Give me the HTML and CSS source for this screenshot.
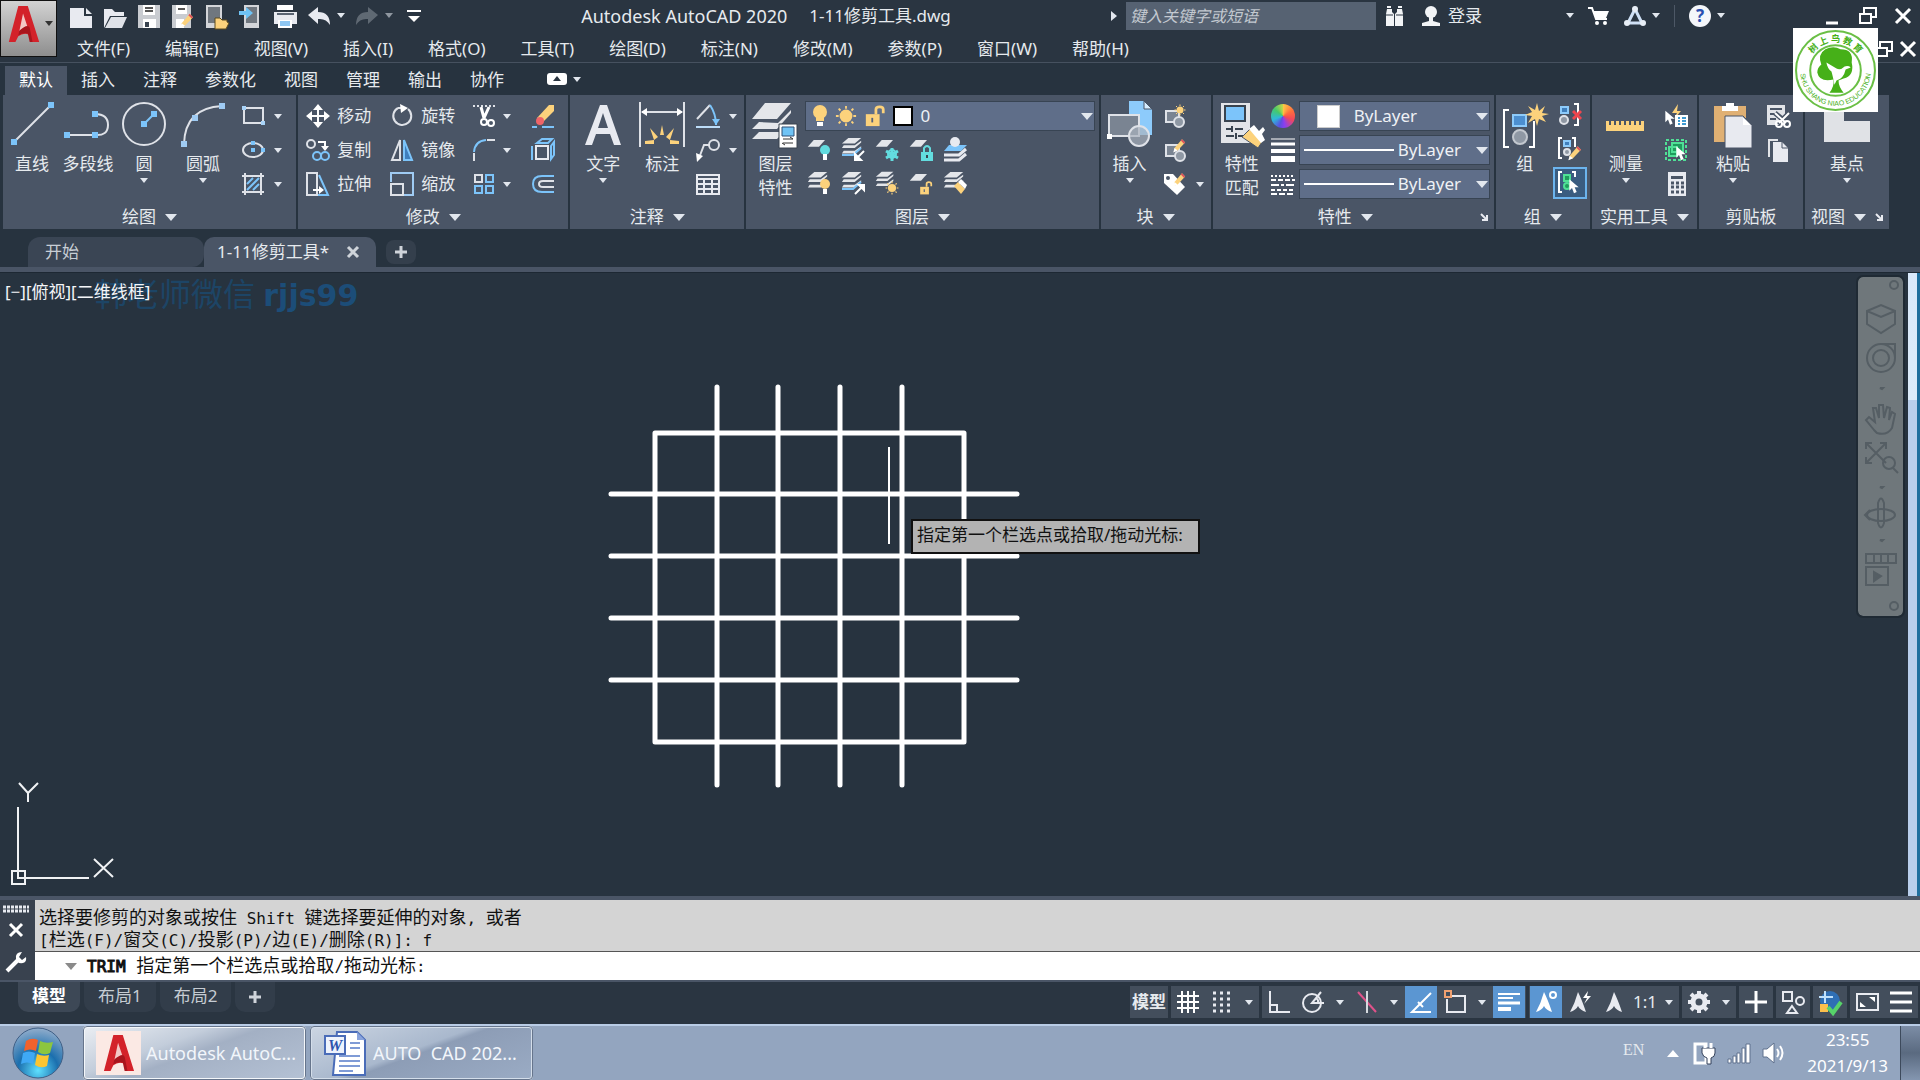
FILE: index.html
```
<!DOCTYPE html>
<html lang="zh-CN">
<head>
    <meta charset="UTF-8">
    <meta name="viewport" content="width=device-width, initial-scale=1.0">
    <title>Autodesk AutoCAD 2020 - 1-11修剪工具.dwg</title>
    <link rel="stylesheet" href="styles.css">
</head>
<body>

<!-- Symboles partagés -->
<svg class="sprite" aria-hidden="true">
  <symbol id="sheet" viewBox="0 0 24 24"><path d="M9 4h15l-8 9H1z" fill="#e4e6ea"/></symbol>
  <symbol id="stack" viewBox="0 0 24 24">
    <path d="M8 1h14l-7 6H1z" fill="#e4e6ea"/>
    <path d="M4 9h-1l-2 3h14l7-6v-2l-7 5zM4 15h-1l-2 3h14l7-6v-2l-7 5z" fill="#e4e6ea"/>
  </symbol>
  <symbol id="bulb" viewBox="0 0 16 24"><circle cx="8" cy="8" r="7" fill="#fcd27c"/><path d="M4 12h8v5H4z" fill="#fcd27c"/><path d="M5 18h6v4H5z" fill="#fff"/></symbol>
  <symbol id="sun" viewBox="0 0 24 24"><circle cx="12" cy="12" r="7" fill="#fcd27c"/><path d="M12 1v3M12 20v3M1 12h3M20 12h3M4 4l2 2M18 18l2 2M4 20l2-2M18 6l2-2" stroke="#fcd27c" stroke-width="2"/></symbol>
  <symbol id="lock" viewBox="0 0 24 24"><path d="M2 10h15v13H2z" fill="#fcd27c"/><path d="M13 10V5q0-3 4-3t4 3v4" fill="none" stroke="#fcd27c" stroke-width="3"/><path d="M9 14v5" stroke="#56627a" stroke-width="2"/></symbol>
  <symbol id="pencil" viewBox="0 0 24 24"><path d="M4 16L16 2l5 5L9 20l-6 2z" fill="#fcd27c"/><path d="M16 2l5 5-2 2-5-5z" fill="#e0525c"/><path d="M4 16l5 4-7 3z" fill="#fff"/></symbol>
  <symbol id="alogo" viewBox="0 0 34 40"><path d="M11 1h10l12 38h-9l-2-8q-6-2-11 2l-3 6H1z" fill="#d3222a"/><path d="M16 9l5 15q-6 0-9 4z" fill="#f3c8c6"/><path d="M12 27q9-8 11-3l3 15h-3l-2-9q-6-1-10 2z" fill="#a8151d"/></symbol>
  <symbol id="hand" viewBox="0 0 24 24"><path d="M2 2v17l4-4 3 8 4-2-3-7h6z" fill="#fff"/></symbol>
</svg>

<!-- Barre de titre + menus -->
<header class="header">
  <button class="app-btn" aria-label="应用程序菜单"><svg width="34" height="38"><use href="#alogo"/></svg><i class="tri sm dark"></i></button>
  <div class="titlebar">
    <div class="quick">
      <button aria-label="新建"><svg width="24" height="24"><path d="M1 4h14v8h8v12H1z" fill="#e8eaf0"/><path d="M17 4l6 6h-6z" fill="#e8eaf0"/></svg></button>
      <button aria-label="打开"><svg width="24" height="24"><path d="M1 24V5h8l3 3h9v4H7z" fill="#e8eaf0"/><path d="M8 13h16l-5 11H2z" fill="#dfe2e8"/></svg></button>
      <button aria-label="保存"><svg width="24" height="24"><path d="M1 1h22v23H1z" fill="#c9ccd1"/><path d="M6 1h12v10H6z" fill="#fff"/><path d="M8 4h8M8 7h8" stroke="#555" stroke-width="2"/><path d="M6 15h13v9H6z" fill="#fff"/><path d="M8 18h4v5H8z" fill="#38434f"/></svg></button>
      <button aria-label="另存为"><svg width="24" height="24"><path d="M1 1h19v23H1z" fill="#c9ccd1"/><path d="M5 1h11v9H5z" fill="#fff"/><path d="M7 5h7" stroke="#555" stroke-width="2"/><path d="M5 15h8v9H5z" fill="#fff"/><use href="#pencil" x="8" y="8" width="16" height="17"/></svg></button>
      <button aria-label="从移动设备打开"><svg width="24" height="24"><path d="M1 1h16v23H1z" fill="#d3d5d9"/><path d="M3 3h12v16H3z" fill="#70777f"/><path d="M10 14h5l2 2h5v2l2 1-3 6H10z" fill="#fcd27c" stroke="#5b4a20"/></svg></button>
      <button aria-label="保存到移动设备"><svg width="24" height="24"><path d="M5 1h15v23H5z" fill="#d3d5d9"/><path d="M7 3h11v16H7z" fill="#70777f"/><path d="M0 7h7V3l7 6-7 6v-4H0z" fill="#6fc3f5"/></svg></button>
      <button aria-label="打印"><svg width="24" height="24"><path d="M4 1h16v5H4z" fill="#fff"/><path d="M1 8h23v12H1z" fill="#e8eaf0"/><path d="M4 10h17" stroke="#5a6472" stroke-width="2"/><path d="M5 16h14v8H5z" fill="#fff"/><path d="M7 17h10v5H7z" fill="#8ec6f2"/></svg></button>
      <span class="pair"><button aria-label="放弃"><svg width="24" height="24"><path d="M1 11L11 3v5q12 0 12 13-4-7-12-6v5z" fill="#e8eaf0"/></svg></button><i class="tri sm"></i></span>
      <span class="pair dim"><button aria-label="重做"><svg width="24" height="24"><path d="M23 11L13 3v5Q1 8 1 21q4-7 12-6v5z" fill="#8c949d"/></svg></button><i class="tri sm"></i></span>
      <button aria-label="自定义"><svg width="14" height="24"><path d="M0 7h14" stroke="#fff" stroke-width="2"/><path d="M1 12h12l-6 6z" fill="#fff"/></svg></button>
    </div>
    <h1 class="title"><span class="product">Autodesk AutoCAD 2020</span><span>1-11修剪工具.dwg</span></h1>
    <div class="search"><i class="tri side"></i><input type="text" placeholder="键入关键字或短语" aria-label="搜索"></div>
    <div class="account">
      <button aria-label="搜索帮助"><svg width="22" height="22"><path d="M3 4h5v3l2 2v12H2V9zM13 4h5l1 5v12h-8V9l2-2z" fill="#f2f4f6"/><path d="M3 1h4v2H3zM14 1h4v2h-4z" fill="#f2f4f6"/><path d="M2 10h7M12 10h7" stroke="#2a3541"/></svg></button>
      <button class="login"><svg width="22" height="22"><circle cx="11" cy="7" r="6" fill="#f2f4f6"/><path d="M9 12h4v4l7 2v3H2v-3l7-2z" fill="#f2f4f6"/></svg>登录</button>
      <i class="tri sm login-arrow"></i>
      <button class="cart" aria-label="购物车"><svg width="22" height="22"><path d="M0 3h4l4 11h11" fill="none" stroke="#fff" stroke-width="2"/><path d="M5 6h16l-3 7H8z" fill="#fff"/><circle cx="9" cy="18" r="2" fill="#fff"/><circle cx="17" cy="18" r="2" fill="#fff"/></svg></button>
      <span class="pair"><button aria-label="Autodesk App"><svg width="22" height="22"><path d="M11 4L4 18h14z" fill="none" stroke="#cfe0f5" stroke-width="3"/><g fill="#e8eef6"><circle cx="11" cy="4" r="3"/><circle cx="3" cy="18" r="3"/><circle cx="19" cy="18" r="3"/></g></svg></button><i class="tri sm"></i></span>
      <span class="pair help"><button aria-label="帮助"><svg width="22" height="22"><circle cx="11" cy="11" r="11" fill="#f4f6fa"/><text x="11" y="17" text-anchor="middle" class="help-mark">?</text></svg></button><i class="tri sm"></i></span>
    </div>
    <div class="win-btns">
      <button aria-label="最小化"><svg width="20" height="22"><path d="M3 18h12" stroke="#fff" stroke-width="3"/></svg></button>
      <button aria-label="还原"><svg width="20" height="22"><path d="M6 8V3h12v9h-4M2 9h11v9H2z" fill="none" stroke="#fff" stroke-width="2"/></svg></button>
      <button aria-label="关闭"><svg width="20" height="22"><path d="M3 4l14 14M17 4L3 18" stroke="#fff" stroke-width="3"/></svg></button>
    </div>
  </div>
  <nav class="menubar">
    <a href="#">文件(F)</a><a href="#">编辑(E)</a><a href="#">视图(V)</a><a href="#">插入(I)</a><a href="#">格式(O)</a><a href="#">工具(T)</a><a href="#">绘图(D)</a><a href="#">标注(N)</a><a href="#">修改(M)</a><a href="#">参数(P)</a><a href="#">窗口(W)</a><a href="#">帮助(H)</a>
    <div class="doc-btns">
      <button aria-label="还原文档"><svg width="20" height="20"><path d="M6 8V3h12v9h-4M2 9h11v8H2z" fill="none" stroke="#fff" stroke-width="2"/></svg></button>
      <button aria-label="关闭文档"><svg width="20" height="20"><path d="M3 3l14 14M17 3L3 17" stroke="#fff" stroke-width="3"/></svg></button>
    </div>
  </nav>
</header>

<!-- Onglets du ruban -->
<nav class="ribbon-tabs">
  <a href="#" class="active">默认</a><a href="#">插入</a><a href="#">注释</a><a href="#">参数化</a><a href="#">视图</a><a href="#">管理</a><a href="#">输出</a><a href="#">协作</a>
  <button class="pair" aria-label="最小化功能区"><svg width="20" height="12"><rect width="20" height="12" rx="3" fill="#fff"/><path d="M10 3l4 5H6z" fill="#2a3541"/></svg><i class="tri sm"></i></button>
</nav>

<!-- Ruban -->
<div class="ribbon">
  <section class="panel draw">
    <div class="body">
      <button class="big"><svg width="46" height="46"><path d="M5 41L42 4" stroke="#dfe2e8" stroke-width="2"/><path d="M2 38h6v6H2zM39 1h6v6h-6z" fill="#7cc4fa"/></svg>直线</button>
      <button class="big wide"><svg width="50" height="46"><path d="M4 34h28M32 13q13 0 13 11t-13 10" fill="none" stroke="#dfe2e8" stroke-width="2"/><path d="M1 31h6v6H1zM29 31h6v6h-6zM29 10h6v6h-6z" fill="#7cc4fa"/></svg>多段线</button>
      <button class="big"><svg width="46" height="46"><circle cx="23" cy="23" r="21" fill="none" stroke="#dfe2e8" stroke-width="2"/><path d="M23 23l9-9" stroke="#7cc4fa" stroke-width="2"/><path d="M20 20h6v6h-6zM30 10h6v6h-6z" fill="#7cc4fa"/></svg>圆<i class="tri sm"></i></button>
      <button class="big wider"><svg width="46" height="46"><path d="M4 43Q5 7 42 5" fill="none" stroke="#dfe2e8" stroke-width="2"/><path d="M1 40h6v6H1zM12 14h6v6h-6zM39 2h6v6h-6z" fill="#9fcbf3"/></svg>圆弧<i class="tri sm"></i></button>
      <div class="small-col">
        <button><svg width="24" height="24"><path d="M3 4h19v15H3z" fill="none" stroke="#dfe2e8" stroke-width="2"/><path d="M1 2h4v4H1zM20 17h4v4h-4z" fill="#a8d3f8"/></svg><i class="tri sm"></i></button>
        <button><svg width="24" height="24"><ellipse cx="12" cy="12" rx="10" ry="7" fill="none" stroke="#dfe2e8" stroke-width="2"/><path d="M10 3h4v4h-4zM10 10h4v4h-4zM20 10h4v4h-4z" fill="#7cc4fa"/></svg><i class="tri sm"></i></button>
        <button><svg width="24" height="24"><path d="M4 1v22M20 1v22M1 4h22M1 20h22" stroke="#dfe2e8" stroke-width="2"/><path d="M6 12l6-6M6 18L18 6M12 18l6-6" stroke="#7cc4fa" stroke-width="2"/></svg><i class="tri sm"></i></button>
      </div>
    </div>
    <h2>绘图<i class="tri"></i></h2>
  </section>

  <section class="panel modify">
    <div class="body">
      <div class="mod-grid">
        <button><svg width="24" height="24"><path d="M12 3v18M3 12h18" stroke="#fff" stroke-width="2"/><path d="M12 0l5 6H7zM12 24l5-6H7zM0 12l6-5v10zM24 12l-6-5v10z" fill="#fff"/></svg>移动</button>
        <button><svg width="24" height="24"><path d="M18 5a9 9 0 1 1-10-1M8 4h4" fill="none" stroke="#dfe2e8" stroke-width="2"/><path d="M10 0l8 4-7 5z" fill="#fff"/></svg>旋转</button>
        <button><svg width="24" height="24"><path d="M1 2h22" stroke="#dfe2e8" stroke-width="2" stroke-dasharray="2 2"/><path d="M9 3l3 11M17 3l-5 11" stroke="#fff" stroke-width="3"/><g fill="none" stroke="#fff" stroke-width="2"><circle cx="12" cy="18" r="3"/><circle cx="19" cy="19" r="3"/></g></svg><i class="tri sm"></i></button>
        <button aria-label="删除"><svg width="24" height="24"><path d="M6 14L18 1h5v6L11 19z" fill="#fcd27c"/><circle cx="9" cy="17" r="4" fill="#f06468"/><path d="M1 23h5M11 23h12" stroke="#7cc4fa" stroke-width="2"/></svg></button>
        <button><svg width="24" height="24"><circle cx="5" cy="6" r="4" fill="none" stroke="#dfe2e8" stroke-width="2"/><g fill="none" stroke="#7cc4fa" stroke-width="2"><circle cx="11" cy="18" r="4"/><circle cx="19" cy="18" r="4"/></g><path d="M12 4h7v6" fill="none" stroke="#fff" stroke-width="2"/><path d="M15 8h8l-4 5z" fill="#fff"/></svg>复制</button>
        <button><svg width="24" height="24"><path d="M10 2v20H2z" fill="none" stroke="#dfe2e8" stroke-width="2"/><path d="M14 2v20h8z" fill="#3f7fbd" stroke="#7cc4fa" stroke-width="2"/></svg>镜像</button>
        <button><svg width="24" height="24"><path d="M2 14Q3 3 14 2" fill="none" stroke="#7cc4fa" stroke-width="2"/><path d="M2 15v8M15 2h8" stroke="#dfe2e8" stroke-width="2"/></svg><i class="tri sm"></i></button>
        <button aria-label="分解"><svg width="24" height="24"><path d="M5 8h12v13H5z" fill="none" stroke="#e8eaf0" stroke-width="2"/><path d="M1 8v14M6 5l5-4h10l-4 4zM20 8l3-4v13l-3 4z" fill="none" stroke="#7cc4fa" stroke-width="2"/></svg></button>
        <button><svg width="24" height="24"><path d="M1 1h10v22H1z" fill="none" stroke="#dfe2e8" stroke-width="2"/><path d="M13 3l9 20H12" fill="none" stroke="#7cc4fa" stroke-width="2"/><path d="M7 17h6v-3l5 4-5 4v-3H7z" fill="#fff"/></svg>拉伸</button>
        <button><svg width="24" height="24"><path d="M1 10V1h22v22H14" fill="none" stroke="#9fcbf3" stroke-width="2"/><path d="M1 12h12v11H1z" fill="none" stroke="#dfe2e8" stroke-width="2"/></svg>缩放</button>
        <button><svg width="24" height="24"><path d="M3 3h7v7H3z" fill="none" stroke="#dfe2e8" stroke-width="2"/><path d="M14 3h7v7h-7zM3 14h7v7H3zM14 14h7v7h-7z" fill="none" stroke="#7cc4fa" stroke-width="2"/></svg><i class="tri sm"></i></button>
        <button aria-label="偏移"><svg width="24" height="24"><path d="M23 4H11q-9 0-9 8t9 8h12" fill="none" stroke="#7cc4fa" stroke-width="2"/><path d="M23 9H12q-4 0-4 3t4 3h11" fill="none" stroke="#dfe2e8" stroke-width="2"/></svg></button>
      </div>
    </div>
    <h2>修改<i class="tri"></i></h2>
  </section>

  <section class="panel note">
    <div class="body">
      <button class="big"><svg width="46" height="46"><path d="M20 4h7l14 40h-7l-4-11H16l-4 11H5zM18 27h10l-5-15z" fill="#e8eaf0" fill-rule="evenodd"/></svg>文字<i class="tri sm"></i></button>
      <button class="big wider"><svg width="46" height="46"><path d="M1 1v45M45 1v45M3 11h40" stroke="#dfe2e8" stroke-width="2"/><path d="M2 11l6-4v8zM44 11l-6-4v8z" fill="#fff"/><path d="M23 24l2 10h-4zM11 27l8 9-4 3zM35 27l-8 9 4 3zM6 40l9-1v4H6zM40 40l-9-1v4h9z" fill="#fcd27c"/></svg>标注</button>
      <div class="small-col">
        <button><svg width="24" height="24"><path d="M1 15L14 1" stroke="#dfe2e8" stroke-width="2"/><path d="M14 1q6 9 6 20" fill="none" stroke="#7cc4fa" stroke-width="2"/><path d="M16 15h8l-4 6z" fill="#7cc4fa"/><path d="M0 23h24" stroke="#bcdcf8" stroke-width="2"/></svg><i class="tri sm"></i></button>
        <button><svg width="24" height="24"><circle cx="18" cy="7" r="5" fill="none" stroke="#dfe2e8" stroke-width="2"/><path d="M13 7H8L3 20" fill="none" stroke="#dfe2e8" stroke-width="2"/><path d="M0 15l7 3-6 6z" fill="#fff"/></svg><i class="tri sm"></i></button>
        <button aria-label="表格"><svg width="24" height="24"><path d="M1 3h22v19H1z M1 7h22M1 12h22M1 17h22M8 7v15M16 7v15" fill="none" stroke="#e8eaf0" stroke-width="2"/></svg></button>
      </div>
    </div>
    <h2>注释<i class="tri"></i></h2>
  </section>

  <section class="panel layers">
    <div class="body">
      <button class="big"><svg width="48" height="46"><path d="M14 2h26L26 18H1zM8 21L1 28h25L40 12v-3L27 22zM8 31L1 38h25l2-2V31z" fill="#e4e6ea"/><path d="M28 23h18v24H28z" fill="#fff" stroke="#38434f"/><path d="M31 26h12v9H31z" fill="#6fc3f5" stroke="#2f4f74"/><path d="M32 38h10M32 42h10M39 36l3 2M34 44l-3-2" stroke="#333"/></svg>图层<br>特性</button>
      <div class="layer-side">
        <div class="combo">
          <svg width="16" height="24"><use href="#bulb"/></svg><svg width="22" height="24"><use href="#sun"/></svg><svg width="22" height="24"><use href="#lock"/></svg><i class="swatch black"></i>
          <select aria-label="图层"><option>0</option></select><i class="tri"></i>
        </div>
        <div class="layer-icons">
          <button aria-label="关"><svg width="24" height="24"><use href="#sheet" width="18" height="18"/><circle cx="18" cy="13" r="5" fill="#63dcdf"/><path d="M16 17h4v6h-4z" fill="#fff"/></svg></button>
          <button aria-label="隔离"><svg width="24" height="24"><use href="#stack" width="22" height="22"/><path d="M1 18h11l8-7" fill="none" stroke="#7cc4fa" stroke-width="2"/><path d="M23 14l-6 6M14 17v6h6z" fill="#fff" stroke="#fff" stroke-width="2"/></svg></button>
          <button aria-label="冻结"><svg width="24" height="24"><use href="#sheet" width="18" height="18"/><path d="M17 11v13M11 14l12 7M23 14l-12 7" stroke="#63dcdf" stroke-width="3"/><circle cx="17" cy="17" r="4" fill="none" stroke="#63dcdf" stroke-width="2"/></svg></button>
          <button aria-label="锁定"><svg width="24" height="24"><use href="#sheet" width="18" height="18"/><path d="M12 15h12v9H12z" fill="#63dcdf"/><path d="M15 15v-4q3-4 6 0v4" fill="none" stroke="#63dcdf" stroke-width="2"/><path d="M18 18v3" stroke="#38434f" stroke-width="2"/></svg></button>
          <button aria-label="置为当前"><svg width="24" height="24"><path d="M6 8h18l-6 6H1z" fill="#7cc4fa"/><circle cx="12" cy="5" r="5" fill="#e8eaf0"/><path d="M1 18h15l7-6M1 23h15l7-6" fill="none" stroke="#e8eaf0" stroke-width="3"/></svg></button>
          <button aria-label="全部打开"><svg width="24" height="24"><use href="#stack" width="22" height="22"/><circle cx="18" cy="13" r="5" fill="#fcd27c"/><path d="M16 18h4v5h-4z" fill="#fff"/></svg></button>
          <button aria-label="取消隔离"><svg width="24" height="24"><use href="#stack" width="22" height="22"/><path d="M1 18h11l8-7" fill="none" stroke="#7cc4fa" stroke-width="2"/><path d="M14 23l6-6M18 14h5v5z" fill="#fff" stroke="#fff" stroke-width="2"/></svg></button>
          <button aria-label="全部解冻"><svg width="24" height="24"><use href="#stack" width="20" height="20"/><use href="#sun" x="10" y="10" width="14" height="14"/></svg></button>
          <button aria-label="解锁"><svg width="24" height="24"><use href="#sheet" width="18" height="18"/><use href="#lock" x="10" y="10" width="14" height="14"/></svg></button>
          <button aria-label="匹配图层"><svg width="24" height="24"><use href="#stack" width="22" height="22"/><path d="M11 15l4-4 7 7-4 5z" fill="#fcd27c"/><path d="M15 11l3-3 6 6-2 4z" fill="#fff"/></svg></button>
        </div>
      </div>
    </div>
    <h2>图层<i class="tri"></i></h2>
  </section>

  <section class="panel block">
    <div class="body">
      <button class="big"><svg width="48" height="46"><path d="M23 0h15l8 8v26H23z" fill="#8dcbfb"/><path d="M38 0l8 8h-8z" fill="#d7edff" stroke="#4a5566"/><path d="M3 14h30v21H3z" fill="#7a8492" stroke="#dfe2e8" stroke-width="2"/><circle cx="33" cy="35" r="10" fill="#aab2bd" fill-opacity=".7" stroke="#dfe2e8" stroke-width="2"/><path d="M1 33h5v5H1z" fill="#fff"/></svg>插入<i class="tri sm"></i></button>
      <div class="small-col">
        <button><svg width="24" height="24"><path d="M3 7h13v11H3z" fill="#7a8492" stroke="#dfe2e8" stroke-width="2"/><circle cx="16" cy="18" r="5" fill="#8f98a4" stroke="#dfe2e8" stroke-width="2"/><use href="#sun" x="11" y="0" width="12" height="12"/></svg></button>
        <button><svg width="24" height="24"><path d="M3 7h13v11H3z" fill="#7a8492" stroke="#dfe2e8" stroke-width="2"/><circle cx="17" cy="18" r="5" fill="#8f98a4" stroke="#dfe2e8" stroke-width="2"/><use href="#pencil" x="9" y="0" width="15" height="15"/></svg></button>
        <button class="with-arrow"><svg width="24" height="24"><path d="M1 2h9l12 13-8 8L1 11z" fill="#fff"/><circle cx="5" cy="6" r="2" fill="#4a5566"/><use href="#pencil" x="9" y="0" width="15" height="15"/></svg><i class="tri sm"></i></button>
      </div>
    </div>
    <h2>块<i class="tri"></i></h2>
  </section>

  <section class="panel props">
    <div class="body">
      <button class="big"><svg width="48" height="48"><path d="M3 2h29v40H3z" fill="#e2e4e8"/><path d="M7 5h20v15H7z" fill="#7cc4fa" stroke="#38434f" stroke-width="2"/><path d="M8 28h6M17 28h8M8 35h8M20 35h6M14 25v6M18 32v6" stroke="#38434f" stroke-width="2"/><path d="M24 36l8-8 12 13-4 6z" fill="#fcd27c" stroke="#4a5566"/><path d="M31 28l5-4 5 6 4-4 2 3-3 4 3 6-4 3z" fill="#fff"/></svg>特性<br>匹配</button>
      <div class="small-col tight">
        <button aria-label="颜色"><span class="wheel"></span></button>
        <button aria-label="线宽"><svg width="24" height="24"><path d="M0 1h24" stroke="#fff"/><path d="M0 6h24" stroke="#fff" stroke-width="3"/><path d="M0 13h24" stroke="#fff" stroke-width="4"/><path d="M0 21h24" stroke="#fff" stroke-width="6"/></svg></button>
        <button aria-label="线型"><svg width="24" height="24"><g stroke="#fff" stroke-width="2"><path d="M0 4h24" stroke-dasharray="2 2"/><path d="M0 8h24" stroke-dasharray="5 2"/><path d="M0 13h24" stroke-dasharray="8 2 3 2"/><path d="M0 18h24" stroke-dasharray="4 2"/><path d="M0 22h24" stroke-dasharray="6 2"/></g></svg></button>
      </div>
      <div class="prop-combos">
        <div class="combo"><i class="swatch"></i><select aria-label="对象颜色"><option>ByLayer</option></select><i class="tri"></i></div>
        <div class="combo line"><i class="rule"></i><select aria-label="线宽"><option>ByLayer</option></select><i class="tri"></i></div>
        <div class="combo line"><i class="rule"></i><select aria-label="线型"><option>ByLayer</option></select><i class="tri"></i></div>
      </div>
    </div>
    <h2>特性<i class="tri"></i><svg class="launch" width="8" height="8"><path d="M1 1l5 5M7 2v5H2" fill="none" stroke="#e8eaf0" stroke-width="2"/></svg></h2>
  </section>

  <section class="panel group">
    <div class="body">
      <button class="big"><svg width="48" height="48"><path d="M8 9H3v37h5M28 46h5V20" fill="none" stroke="#fff" stroke-width="2"/><path d="M12 14h13v11H12z" fill="#4c8fd0" stroke="#8dcbfb" stroke-width="2"/><circle cx="19" cy="36" r="7" fill="#8f98a4" stroke="#c3c8cf" stroke-width="2"/><path d="M36 2l2 8 6-5-3 7 7 1-7 2 4 6-7-3-2 7-2-7-7 4 4-7-7-1 7-3-4-6 7 4z" fill="#fcd27c"/></svg>组</button>
      <div class="small-col">
        <button aria-label="解除编组"><svg width="24" height="24"><path d="M16 1h4v21h-4" fill="none" stroke="#fff" stroke-width="2"/><path d="M3 4h7v6H3z" fill="#3f7fbd" stroke="#8dcbfb" stroke-width="2"/><circle cx="6" cy="17" r="4" fill="#8f98a4" stroke="#dfe2e8" stroke-width="2"/><path d="M15 8l8 8M23 8l-8 8" stroke="#f0464e" stroke-width="3"/></svg></button>
        <button aria-label="组编辑"><svg width="24" height="24"><path d="M4 1H1v20h3M14 1h3v9" fill="none" stroke="#fff" stroke-width="2"/><path d="M6 4h6v5H6z" fill="#3f7fbd" stroke="#8dcbfb" stroke-width="2"/><circle cx="9" cy="15" r="3" fill="#8f98a4" stroke="#dfe2e8" stroke-width="2"/><use href="#pencil" x="9" y="8" width="16" height="16"/></svg></button>
        <button class="on" aria-label="启用组选择"><svg width="24" height="24"><path d="M4 1H1v20h3M14 1h3v5" fill="none" stroke="#fff" stroke-width="2"/><path d="M6 4h6v6H6z" fill="#1f9b5c" stroke="#4fe096" stroke-width="2"/><circle cx="9" cy="15" r="3" fill="#1f9b5c" stroke="#4fe096" stroke-width="2"/><use href="#hand" x="10" y="6" width="16" height="18"/></svg></button>
      </div>
    </div>
    <h2>组<i class="tri"></i></h2>
  </section>

  <section class="panel util">
    <div class="body">
      <button class="big"><svg width="46" height="46"><path d="M3 20h3v4h2v-4h3v4h2v-4h3v4h2v-4h3v4h2v-4h3v4h2v-4h3v4h2v-4h3v4h2v-4h3v10H3z" fill="#fcd27c"/></svg>测量<i class="tri sm"></i></button>
      <div class="small-col">
        <button aria-label="快速选择"><svg width="24" height="24"><path d="M14 0l-6 9h5l-3 6 7-8h-4z" fill="#fcd27c"/><path d="M11 11h13v12H11z" fill="#fff"/><path d="M14 14h2M18 14h4M14 17h2M18 17h4M14 20h2M18 20h4" stroke="#3f9ad0" stroke-width="2"/><use href="#hand" x="0" y="4" width="16" height="19"/></svg></button>
        <button aria-label="全部选择"><svg width="24" height="24"><path d="M2 2h20v20H2z" fill="none" stroke="#4fe096" stroke-width="2" stroke-dasharray="3 2"/><path d="M8 5h11v9H8zM5 9h8v9H5z" fill="#1f9b5c" stroke="#4fe096" stroke-width="2"/><use href="#hand" x="11" y="6" width="16" height="18"/></svg></button>
        <button aria-label="快速计算器"><svg width="24" height="24"><path d="M4 0h18v24H4z" fill="#e8eaf0"/><path d="M7 4h12v3H7z" fill="#4a5566"/><path d="M7 11h3M12 11h3M17 11h3M7 15h3M12 15h3M17 15h3M7 20h3M12 20h3M17 20h3" stroke="#4a5566" stroke-width="3"/></svg></button>
      </div>
    </div>
    <h2>实用工具<i class="tri"></i></h2>
  </section>

  <section class="panel clip">
    <div class="body">
      <button class="big"><svg width="46" height="48"><path d="M4 5h32v36H4z" fill="#e0b073"/><path d="M12 5h4V2h8v3h4v5H12z" fill="#fff"/><path d="M15 15h18l9 9v23H15z" fill="#e8eaf0" stroke="#4a5566"/><path d="M33 15v9h9z" fill="#4a5566"/><path d="M33 16v8h8z" fill="#fff"/></svg>粘贴<i class="tri sm"></i></button>
      <div class="small-col">
        <button aria-label="剪切"><svg width="24" height="24"><path d="M1 1h18v20H1z" fill="#e2e4e8"/><path d="M4 5h12M4 10h9M4 15h6" stroke="#4a5566" stroke-width="2"/><path d="M9 9l12 10M23 9L12 20" stroke="#4a5566" stroke-width="5"/><path d="M9 9l11 10M23 9L13 19" stroke="#fff" stroke-width="2"/><g fill="none" stroke="#fff" stroke-width="2"><circle cx="13" cy="20" r="3"/><circle cx="21" cy="20" r="3"/></g></svg></button>
        <button aria-label="复制剪裁"><svg width="24" height="24"><path d="M12 2H3v17" fill="none" stroke="#e2e4e8" stroke-width="2"/><path d="M7 4h9l6 6v14H7z" fill="#e8eaf0"/><path d="M16 4v6h6" fill="none" stroke="#4a5566"/></svg></button>
      </div>
    </div>
    <h2>剪贴板</h2>
  </section>

  <section class="panel view">
    <div class="body">
      <button class="big"><svg width="46" height="46"><path d="M0 0h20v20h26v21H0z" fill="#e0e2e6"/></svg>基点<i class="tri sm"></i></button>
    </div>
    <h2>视图<i class="tri"></i><svg class="launch" width="8" height="8"><path d="M1 1l5 5M7 2v5H2" fill="none" stroke="#e8eaf0" stroke-width="2"/></svg></h2>
  </section>
</div>

<!-- Onglets de fichiers -->
<nav class="file-tabs">
  <a href="#" class="start">开始</a>
  <a href="#" class="active">1-11修剪工具*<svg width="12" height="12"><path d="M1 1l10 10M11 1L1 11" stroke="#cfd4da" stroke-width="3"/></svg></a>
  <button class="add" aria-label="新图形"><svg width="12" height="12"><path d="M6 0v12M0 6h12" stroke="#cfd4da" stroke-width="3"/></svg></button>
</nav>

<!-- Zone de dessin -->
<main class="canvas">
  <div class="watermark">韩老师微信 <b>rjjs99</b></div>
  <div class="vp-label">[−][俯视][二维线框]</div>
  <svg class="drawing" width="420" height="410" viewBox="608 380 420 410">
    <g fill="none" stroke="#fff" stroke-width="5" stroke-linecap="round" stroke-linejoin="round">
      <path d="M655 433h309v309H655z"/>
      <path d="M717 387v398M778 387v398M840 387v398M902 387v398"/>
      <path d="M611 494h406M611 556h406M611 618h406M611 680h406"/>
    </g>
    <path d="M889 447v97" stroke="#fff" stroke-width="2"/>
  </svg>
  <div class="tip">指定第一个栏选点或拾取/拖动光标:</div>
  <svg class="ucs" width="120" height="114" viewBox="0 0 120 114">
    <path d="M18 30v71h71M12 94h13v13H12z" fill="none" stroke="#f0f2f4" stroke-width="2"/>
    <path d="M19 6l9 10M38 6l-10 10v9M94 82l19 18M113 82L94 100" fill="none" stroke="#f0f2f4" stroke-width="2"/>
  </svg>
  <div class="navbar">
    <svg width="45" height="339" fill="none" stroke="#555e64" stroke-width="2">
      <circle cx="36" cy="8" r="4"/>
      <path d="M9 34l14-6 14 6v13l-14 9-14-9zM9 34l14 6 14-6"/>
      <circle cx="23" cy="81" r="14"/><circle cx="23" cy="81" r="8"/><path d="M23 67h14v14"/>
      <path d="M22 111h3l-1 1z"/>
      <path d="M16 153l-8-10 3-3 6 5-2-14h3l3 10v-13h4l1 13 3-11 3 1-1 12 3-8 3 2-3 14q-5 8-15 5z"/>
      <path d="M8 166l20 20M28 166L8 186M8 172v-6h6M28 172v-6h-6M8 180v6h6"/><circle cx="31" cy="186" r="6"/><path d="M35 191l5 5"/>
      <path d="M22 210h3l-1 1z"/>
      <path d="M20 226q3-9 6 0v20q-3 9-6 0z"/><ellipse cx="23" cy="238" rx="14" ry="6"/><path d="M12 233l-5 5 5 5"/>
      <path d="M22 263h3l-1 1z"/>
      <path d="M8 277h30v9H8zM16 277v9M23 277v9M30 277v9M8 290h22v18H8z"/><path d="M16 295l7 4-7 5z" fill="#555e64"/>
      <circle cx="36" cy="329" r="4"/>
    </svg>
  </div>
  <div class="scroll"></div>
</main>

<!-- Ligne de commande -->
<section class="cmd">
  <div class="cmd-side">
    <svg width="26" height="8"><path d="M0 2h26M0 6h26" stroke="#e8eaf0" stroke-width="3" stroke-dasharray="3 1"/></svg>
    <button aria-label="关闭"><svg width="14" height="14"><path d="M1 1l12 12M13 1L1 13" stroke="#fff" stroke-width="3"/></svg></button>
    <button aria-label="自定义"><svg width="22" height="22"><path d="M2 20L13 9" stroke="#fff" stroke-width="4"/><path d="M17 1q-7 0-6 7 1 5 7 4 4-1 3-6l-4 3-3-3z" fill="#fff"/></svg></button>
  </div>
  <div class="cmd-main">
    <div class="history">
      <p>选择要修剪的对象或按住<span> Shift </span>键选择要延伸的对象<span>, </span>或者</p>
      <p><span>[</span>栏选<span>(F)/</span>窗交<span>(C)/</span>投影<span>(P)/</span>边<span>(E)/</span>删除<span>(R)]: f</span></p>
    </div>
    <div class="prompt">
      <i class="tri grey"></i>
      <label for="cmd"><b>TRIM</b> 指定第一个栏选点或拾取<span>/</span>拖动光标<span>:</span></label>
      <input type="text" id="cmd">
    </div>
  </div>
</section>

<!-- Barre d'état -->
<footer class="status">
  <nav class="layouts"><a href="#" class="active">模型</a><a href="#">布局1</a><a href="#">布局2</a><button aria-label="新建布局"><svg width="12" height="12"><path d="M6 0v12M0 6h12" stroke="#cfd4da" stroke-width="3"/></svg></button></nav>
  <div class="tools">
    <div class="grp"><button class="txt bold">模型</button></div>
    <div class="grp">
      <button aria-label="栅格"><svg width="24" height="24"><path d="M6 1v22M12 1v22M18 1v22M1 6h22M1 12h22M1 18h22" stroke="#fff" stroke-width="2"/></svg></button>
      <button aria-label="捕捉"><svg width="24" height="24"><path d="M3 3h18M3 9h18M3 15h18M3 21h18" stroke="#e8eaf0" stroke-width="3" stroke-dasharray="3 4"/></svg></button><i class="tri sm"></i>
    </div>
    <div class="grp">
      <button aria-label="正交"><svg width="24" height="24"><path d="M3 1v21h20M3 15h7v7" fill="none" stroke="#e8eaf0" stroke-width="2"/></svg></button>
      <button aria-label="极轴"><svg width="24" height="24"><circle cx="11" cy="13" r="9" fill="none" stroke="#e8eaf0" stroke-width="2"/><path d="M20 2L11 13h12M15 8q3 2 2 5" fill="none" stroke="#e8eaf0" stroke-width="2"/></svg></button><i class="tri sm"></i>
      <button aria-label="等轴测"><svg width="24" height="24"><path d="M3 2l18 20" stroke="#e0528a" stroke-width="2"/><path d="M12 1v22" stroke="#d5dadf" stroke-width="2"/></svg></button><i class="tri sm"></i>
      <button class="on" aria-label="对象追踪"><svg width="24" height="24"><path d="M22 3L3 22h19" fill="none" stroke="#fff" stroke-width="2"/><path d="M9 12l5 5" stroke="#fff" stroke-width="2"/></svg></button>
      <button aria-label="对象捕捉"><svg width="24" height="24"><path d="M9 6h13v16H4V9" fill="none" stroke="#e8eaf0" stroke-width="2"/><path d="M2 1h6v6H2z" fill="none" stroke="#f0a070" stroke-width="2"/></svg></button><i class="tri sm"></i>
      <button class="on" aria-label="线宽"><svg width="24" height="24"><path d="M1 4h22M1 8h15" stroke="#fff" stroke-width="2"/><path d="M1 13h22" stroke="#fff" stroke-width="3"/><path d="M1 19h13" stroke="#fff" stroke-width="4"/></svg></button>
    </div>
    <div class="grp">
      <button class="on" aria-label="注释可见性"><svg width="24" height="24"><path d="M10 2q4 8 8 20-6-2-8-6-2 4-8 6 5-9 8-20z" fill="#fff"/><circle cx="19" cy="5" r="3" fill="none" stroke="#fff" stroke-width="2"/></svg></button>
      <button aria-label="自动缩放"><svg width="24" height="24"><path d="M10 2q4 8 8 20-6-2-8-6-2 4-8 6 5-9 8-20z" fill="#e8eaf0"/><path d="M20 1l-5 7h4l-3 6 7-8h-4z" fill="#fff"/></svg></button>
      <button aria-label="注释比例"><svg width="24" height="24"><path d="M12 2q4 8 8 20-6-2-8-6-2 4-8 6 5-9 8-20z" fill="#e8eaf0"/></svg></button>
      <button class="txt">1:1</button><i class="tri sm"></i>
    </div>
    <div class="grp"><button aria-label="切换工作空间"><svg width="24" height="24"><circle cx="12" cy="12" r="6" fill="none" stroke="#e8eaf0" stroke-width="5"/><path d="M12 1v4M12 19v4M1 12h4M19 12h4M4 4l3 3M17 17l3 3M4 20l3-3M17 7l3-3" stroke="#e8eaf0" stroke-width="4"/></svg></button><i class="tri sm"></i></div>
    <div class="grp"><button aria-label="注释监视器"><svg width="24" height="24"><path d="M12 1v22M1 12h22" stroke="#fff" stroke-width="3"/></svg></button></div>
    <div class="grp"><button aria-label="隔离对象"><svg width="24" height="24"><g fill="none" stroke="#e8eaf0" stroke-width="2"><path d="M2 2h9v9H2z"/><circle cx="19" cy="11" r="4"/><path d="M11 16l5 7H6z"/></g></svg></button></div>
    <div class="grp"><button aria-label="硬件加速"><svg width="24" height="24"><circle cx="12" cy="11" r="10" fill="#2f6fb5"/><path d="M7 1v12M1 7h14" stroke="#bfe0fb" stroke-width="2"/><path d="M2 14h8v8H2z" fill="#fcc04c"/><path d="M10 17l5 6 8-11" fill="none" stroke="#57d36a" stroke-width="4"/></svg></button></div>
    <div class="grp last">
      <button aria-label="全屏显示"><svg width="24" height="24"><path d="M2 4h21v16H2z" fill="none" stroke="#e8eaf0" stroke-width="2"/><path d="M14 7h6v5zM5 12v5h6z" fill="#fff"/></svg></button>
      <button aria-label="自定义"><svg width="24" height="24"><path d="M1 3h22M1 12h22M1 21h22" stroke="#fff" stroke-width="3"/></svg></button>
    </div>
  </div>
</footer>

<!-- Barre des tâches Windows -->
<div class="taskbar">
  <button class="orb" aria-label="开始"><svg width="52" height="52" viewBox="0 0 52 52">
    <defs><radialGradient id="orb" cx=".5" cy=".85" r=".9"><stop offset="0" stop-color="#5fe0ff"/><stop offset=".45" stop-color="#1b6fae"/><stop offset="1" stop-color="#9fb4cf"/></radialGradient></defs>
    <circle cx="26" cy="26" r="25" fill="url(#orb)" stroke="#3f5f86"/>
    <path d="M14 14q6-4 12-1l-2 11q-6-3-12 0z" fill="#f0622d"/><path d="M28 14q6 3 13 1l-3 11q-6 3-12-1z" fill="#8cc63f"/>
    <path d="M11 26q6-3 12 0l-2 11q-6-3-12 0z" fill="#3fa9f5"/><path d="M25 27q6 3 12 1l-2 11q-6 3-12-1z" fill="#fcc531"/></svg></button>
  <button class="task current"><svg width="45" height="44"><rect width="45" height="44" fill="#fbe9e4"/><use href="#alogo" x="7" y="2" width="32" height="40"/></svg>Autodesk AutoC...</button>
  <button class="task"><svg width="45" height="46"><path d="M14 2h20l8 8v35H10z" fill="#fff" stroke="#4a6cb8" stroke-width="2"/><path d="M34 2v8h8z" fill="#8aa4dc"/><path d="M27 13h10M27 18h10M16 26h21M16 31h21M16 36h21M16 41h14" stroke="#7f9bd6" stroke-width="2"/><path d="M2 6h20v18H2z" fill="#eef3fc" stroke="#4a6cb8" stroke-width="2"/><text x="12" y="21" text-anchor="middle" class="word-mark">W</text></svg>AUTO&nbsp; CAD 202...</button>
  <div class="tray">
    <span class="lang">EN</span>
    <button aria-label="显示隐藏的图标"><i class="tri up"></i></button>
    <svg width="24" height="24"><path d="M3 3h11v19H3z" fill="none" stroke="#fff" stroke-width="3"/><path d="M10 7h13v5q0 4-4 5v6h-4v-6q-4-1-5-5z" fill="#fff" stroke="#33415a"/><path d="M13 2v5M19 2v5" stroke="#fff" stroke-width="3"/></svg>
    <svg width="24" height="24"><path d="M1 18h3v4H1zM6 15h3v7H6zM10 12h3v10h-3zM15 7h3v15h-3zM19 3h4v19h-4z" fill="#fff" stroke="#5f718d"/></svg>
    <svg width="24" height="24"><path d="M1 8h4l7-6v20l-7-6H1z" fill="#fff" stroke="#5f718d"/><path d="M15 8q3 4 0 8M18 5q5 7 0 14" fill="none" stroke="#fff" stroke-width="2"/></svg>
    <time class="clock">23:55<br>2021/9/13</time>
    <button class="desk" aria-label="显示桌面"></button>
  </div>
</div>

<!-- Logo de l'école -->
<div class="school">
  <svg viewBox="0 0 84 84">
    <defs><path id="arcTop" d="M14 42a28 28 0 0 1 56 0"/><path id="arcBottom" d="M7 42a35 35 0 0 0 70 0"/></defs>
    <g fill="none" stroke="#6abf45"><circle cx="42" cy="42" r="39" stroke-width="2"/><circle cx="42" cy="42" r="25" stroke-width="2"/></g>
    <path d="M32 21q8-4 15 0 13 0 11 13 3 13-8 16l-5 2q0 6 5 12H36q5-6 4-13-14 3-16-7 0-5 4-8-4-10 4-15z" fill="#46b018"/>
    <path d="M33 34l10 6q4 2 8-2 4-1 6 1l-5 2q-2 9-9 11l-2 4q-2-10-3-13-4-3-5-9z" fill="#fff"/>
    <text class="arc-cn"><textPath href="#arcTop" startOffset="50%" text-anchor="middle">树 上 鸟 教 育</textPath></text>
    <text class="arc-en"><textPath href="#arcBottom" startOffset="50%" text-anchor="middle">SHU SHANG NIAO EDUCATION</textPath></text>
  </svg>
</div>

</body>
</html>
```
FILE: styles.css
```
* {
    box-sizing: border-box;
}
body {
    margin: 0;
    min-height: 100vh;
    display: flex;
    flex-direction: column;
    font-family: "Noto Sans", "Noto Sans CJK SC", sans-serif;
    font-size: 17px;
    line-height: 24px;
    color: #e6eaee;
    background: #27333f;
    overflow: hidden;
    position: relative;
}
h1, h2, p {
    margin: 0;
    font-size: 17px;
    font-weight: normal;
}
a {
    color: inherit;
    text-decoration: none;
}
button {
    display: flex;
    align-items: center;
    margin: 0;
    padding: 0;
    border: none;
    background: none;
    color: inherit;
    font: inherit;
    white-space: nowrap;
}
svg {
    display: block;
    flex: none;
    overflow: visible;
}
.sprite {
    width: 0;
    height: 0;
    position: absolute;
}
/* Petites flèches */
.tri {
    flex: none;
    width: 0;
    height: 0;
    border: 6px solid transparent;
    border-top: 7px solid #e2e7ee;
    border-bottom: 0;
}
.tri.sm {
    border-width: 5px 4px 0;
}
.tri.dark {
    border-top-color: #333;
}
.tri.grey {
    border-top-color: #8a8a8a;
}
.tri.side {
    border: 5px solid transparent;
    border-left: 6px solid #e2e7ee;
    border-right: 0;
}
.tri.up {
    border: 6px solid transparent;
    border-bottom: 7px solid #fff;
    border-top: 0;
}
.pair {
    display: flex;
    align-items: center;
    gap: 6px;
}
.dim {
    opacity: 0.55;
}

/* En-tête */
.header {
    display: grid;
    grid-template-columns: 57px 1fr;
    grid-template-rows: 31px 31px;
    background: #2a3541;
    border-bottom: 1px solid #46515f;
}
.app-btn {
    grid-row: 1 / 3;
    height: 57px;
    padding: 2px 3px 12px 6px;
    gap: 4px;
    border: 1px solid #111;
    background: linear-gradient(#d2d2d2, #8e8e8e);
}
.titlebar, .quick, .search, .account, .win-btns, .menubar, .doc-btns {
    display: flex;
    align-items: center;
}
.quick {
    gap: 10px;
    padding-left: 12px;
}
.quick > button:last-child {
    padding-left: 4px;
}
.title {
    display: flex;
    gap: 22px;
    margin: 0 auto;
    white-space: nowrap;
}
.product {
    font-size: 18px;
}
.search {
    gap: 9px;
}
.search input {
    width: 250px;
    height: 28px;
    padding: 0 4px;
    border: none;
    background: #566272;
    color: #fff;
    font: italic 16px "Noto Sans", "Noto Sans CJK SC", sans-serif;
}
.search input::placeholder {
    color: #c3c9d0;
}
.account {
    gap: 14px;
    padding-left: 8px;
}
.login {
    gap: 6px;
}
.login-arrow {
    margin-left: 70px;
}
.help {
    padding-left: 14px;
    border-left: 1px solid #4d5866;
}
.help-mark {
    font: bold 17px "Noto Sans", sans-serif;
    fill: #2a4fb0;
}
.win-btns {
    gap: 15px;
    padding: 0 7px 0 98px;
}
.menubar {
    gap: 35px;
    padding: 4px 2px 0 20px;
    white-space: nowrap;
}
.doc-btns {
    gap: 4px;
    margin-left: auto;
}

/* Ruban */
.ribbon-tabs {
    display: flex;
    height: 32px;
    padding: 3px 0 0 5px;
}
.ribbon-tabs a {
    padding: 2px 14px;
}
.ribbon-tabs .active {
    background: #4a5566;
    color: #fff;
}
.ribbon-tabs .pair {
    margin-left: 29px;
    height: 26px;
}
.ribbon {
    display: flex;
    gap: 2px;
    padding: 0 31px 0 3px;
}
.panel {
    min-width: 0;
    display: flex;
    flex-direction: column;
    background: #4a5566;
}
.draw { flex: 293 1 0; }
.modify { flex: 270 1 0; }
.note { flex: 174 1 0; }
.layers { flex: 352 1 0; }
.block { flex: 110 1 0; }
.props { flex: 281 1 0; }
.group { flex: 94 1 0; }
.util { flex: 105 1 0; }
.clip { flex: 104 1 0; }
.view { flex: 84 1 0; }
.body {
    display: flex;
    height: 110px;
    padding: 0 4px;
}
.note .body, .modify .body {
    padding-left: 8px;
}
.util .body, .clip .body {
    padding-left: 9px;
}
.view .body {
    justify-content: center;
}
.panel h2 {
    display: flex;
    align-items: center;
    justify-content: center;
    gap: 9px;
    height: 24px;
    line-height: 24px;
}
.launch {
    margin-right: 6px;
}
.props .launch {
    margin-left: 98px;
}
.props h2 {
    justify-content: flex-end;
}
.view .launch {
    margin: 0;
}
.big {
    flex: none;
    width: 50px;
    flex-direction: column;
    padding-top: 6px;
    line-height: 24px;
}
.big svg {
    height: 46px;
    margin-bottom: 5px;
}
.big .tri {
    margin-top: 2px;
}
.wide {
    width: 62px;
}
.wider {
    width: 68px;
}
.small-col {
    padding: 4px 0 0 4px;
}
.small-col button {
    height: 34px;
    gap: 9px;
}
.note .small-col {
    padding-left: 0;
}
.block .small-col, .clip .small-col {
    padding-left: 8px;
}
.util .small-col {
    padding-left: 13px;
}
.group .small-col {
    padding-left: 3px;
}
.group .small-col button {
    width: 34px;
    height: 32px;
    margin-bottom: 2px;
    justify-content: center;
}
.group .on {
    border: 2px solid #6cb4ee;
    background: #3a5c80;
}
.mod-grid {
    display: grid;
    grid-template-columns: 84px 82px 59px 24px;
    grid-auto-rows: 34px;
    padding-top: 4px;
}
.mod-grid button {
    gap: 7px;
}
.layer-side {
    flex: 1;
    padding: 6px 0 0 5px;
}
.combo {
    display: flex;
    align-items: center;
    height: 30px;
    gap: 7px;
    padding: 0 1px 0 6px;
    border: 1px solid #384453;
    background: #5f6e89;
}
.combo select {
    flex: 1;
    min-width: 0;
    appearance: none;
    padding: 0;
    border: none;
    background: none;
    color: #eef1f5;
    font: inherit;
}
.swatch {
    width: 23px;
    height: 23px;
    border: 1px solid #ccc;
    background: #fff;
}
.swatch.black {
    width: 20px;
    height: 20px;
    border: 2px solid #000;
}
.layer-icons {
    display: grid;
    grid-template-columns: repeat(5, 24px);
    grid-auto-rows: 34px;
    column-gap: 10px;
    padding: 1px 0 0 2px;
}
.wheel {
    width: 24px;
    height: 24px;
    border-radius: 50%;
    background: conic-gradient(#ffc845, #ff6f3d 60deg, #f2485a 110deg, #8a3ff0 170deg, #5a4fe0 200deg, #2fb9d8 250deg, #45c96a 310deg, #c5d84a);
}
.prop-combos {
    flex: 1;
    display: flex;
    flex-direction: column;
    gap: 4px;
    padding: 6px 0 0 4px;
}
.prop-combos .combo {
    gap: 14px;
    padding-left: 17px;
}
.prop-combos .line {
    gap: 4px;
    padding-left: 4px;
}
.rule {
    width: 90px;
    height: 2px;
    background: #fff;
}

/* Onglets de fichiers */
.file-tabs {
    display: flex;
    height: 43px;
    padding: 8px 0 0 28px;
    border-bottom: 5px solid #4a5566;
}
.file-tabs a {
    height: 30px;
    line-height: 30px;
}
.start {
    width: 176px;
    padding-left: 17px;
    border-radius: 12px 12px 12px 0;
    background: #3a4554;
    color: #c8ced5;
}
.file-tabs .active {
    display: flex;
    align-items: center;
    gap: 18px;
    padding: 0 17px 0 13px;
    border-radius: 10px 10px 0 0;
    background: #4a5566;
}
.add {
    width: 30px;
    height: 24px;
    margin: 3px 0 0 10px;
    justify-content: center;
    border-radius: 8px;
    background: #343f4c;
}

/* Zone de dessin */
.canvas {
    flex: 1;
    position: relative;
    border-top: 1px solid #1d2833;
}
.vp-label, .watermark, .drawing, .tip, .ucs, .navbar, .scroll {
    position: absolute;
}
.vp-label {
    top: 7px;
    left: 5px;
    color: #f4f6f8;
}
.watermark {
    top: 1px;
    left: 95px;
    font-size: 32px;
    line-height: 40px;
    color: #1d4566;
    white-space: pre;
}
.watermark b {
    font-family: "DejaVu Sans", sans-serif;
    font-size: 30px;
    color: #1c4d78;
}
.drawing {
    top: 107px;
    left: 608px;
}
.tip {
    top: 246px;
    left: 911px;
    width: 289px;
    height: 35px;
    padding: 2px 4px;
    border: 2px solid #111;
    background: #b3b3b3;
    color: #111;
    white-space: nowrap;
}
.ucs {
    left: 0;
    bottom: 5px;
}
.navbar {
    top: 4px;
    right: 17px;
    border-radius: 5px;
    background: #6f777b;
    outline: 2px solid #1f2a34;
}
.scroll {
    top: 0;
    right: 0;
    bottom: 0;
    width: 12px;
    border-right: 3px solid #1f6f9e;
    background: linear-gradient(#d9e9fb, #dcecfb 127px, #b9cfec 127px);
}

/* Ligne de commande */
.cmd {
    display: flex;
    border-top: 4px solid #4a5566;
    border-bottom: 2px solid #4a5566;
    background: #39424f;
}
.cmd-side {
    width: 35px;
    display: flex;
    flex-direction: column;
    align-items: center;
    gap: 14px;
    padding: 5px 3px 0 0;
}
.cmd-side svg + button {
    margin-top: -4px;
}
.cmd-main {
    flex: 1;
    color: #111;
    font-family: "DejaVu Sans Mono", "Noto Sans CJK SC", monospace;
    font-size: 18px;
}
.cmd-main span, .cmd-main b {
    font-size: 16px;
    line-height: 16px;
}
.history {
    padding: 7px 4px 0;
    background: #d4d4d4;
    border-bottom: 1px solid #555;
}
.history p {
    height: 22px;
    font-size: 18px;
    line-height: 22px;
    white-space: pre;
}
.prompt {
    display: flex;
    align-items: center;
    height: 28px;
    padding-left: 30px;
    background: #fff;
}
.prompt label {
    padding-left: 10px;
    white-space: nowrap;
}
.prompt b {
    font-weight: normal;
    -webkit-text-stroke: 1px #111;
}
.prompt input {
    flex: 1;
    border: none;
    background: none;
    outline: none;
    font: inherit;
}

/* Barre d'état */
.status {
    display: flex;
    justify-content: space-between;
    height: 42px;
    background: #2a3541;
}
.layouts {
    display: flex;
    height: 30px;
    padding-left: 18px;
    gap: 4px;
}
.layouts a, .layouts button {
    padding: 0 14px;
    line-height: 28px;
    border-radius: 0 0 10px 10px;
    background: #323d4a;
    color: #c6ccd3;
}
.layouts .active {
    background: #3d4856;
    color: #fff;
    font-weight: bold;
}
.layouts button {
    padding: 0 14px;
}
.tools {
    display: flex;
    gap: 3px;
    padding: 4px 2px 6px 0;
}
.grp {
    display: flex;
    align-items: center;
    gap: 2px;
    padding: 0 1px;
    background: #434e5c;
}
.grp button {
    height: 32px;
    padding: 0 4px;
}
.grp .tri {
    margin: 0 5px;
}
.grp .on {
    background: #5b96d2;
}
.grp .txt {
    padding: 0 1px;
}
.grp .bold {
    font-weight: bold;
}

/* Barre des tâches */
.taskbar {
    display: flex;
    align-items: center;
    gap: 4px;
    height: 56px;
    padding-left: 12px;
    border-top: 2px solid #b9cce6;
    background: #93a5bf;
}
.orb {
    margin-right: 15px;
}
.task {
    width: 223px;
    height: 54px;
    padding-left: 11px;
    gap: 5px;
    border: 2px solid #d4deea;
    outline: 1px solid #66758c;
    outline-offset: -1px;
    border-radius: 4px;
    background: linear-gradient(160deg, #cbd5e2, #a9b8cd 45%, #8d9db6 50%, #9aabc4);
    color: #f2f6fb;
    font-size: 18px;
    line-height: 20px;
}
.task.current {
    border-color: #f4f7fa;
    background: linear-gradient(160deg, #e9edf2, #c3cddb 35%, #a3b0c4 50%, #b4c1d4);
}
.word-mark {
    font: bold italic 16px "Liberation Serif", serif;
    fill: #2f55ae;
}
.tray {
    display: flex;
    align-items: center;
    align-self: stretch;
    gap: 11px;
    margin-left: auto;
}
.lang {
    font-family: "Liberation Serif", serif;
    font-size: 16px;
    margin: 0 12px 6px 0;
}
.tray button:not(.desk) {
    margin-right: 2px;
}
.clock {
    padding: 0 1px 0 10px;
    font-size: 17px;
    line-height: 26px;
    text-align: center;
    color: #fff;
}
.desk {
    align-self: stretch;
    width: 20px;
    border-left: 1px solid #3d4a5c;
    background: linear-gradient(#7c8da6, #5a6a80 50%, #8496b0);
}

/* Logo */
.school {
    position: absolute;
    top: 28px;
    right: 42px;
    width: 85px;
    height: 84px;
    background: #fff;
}
.arc-cn {
    font: bold 9px "Noto Sans CJK SC", sans-serif;
    fill: #46b018;
}
.arc-en {
    font: 7px "Liberation Sans", sans-serif;
    fill: #46b018;
}
```
